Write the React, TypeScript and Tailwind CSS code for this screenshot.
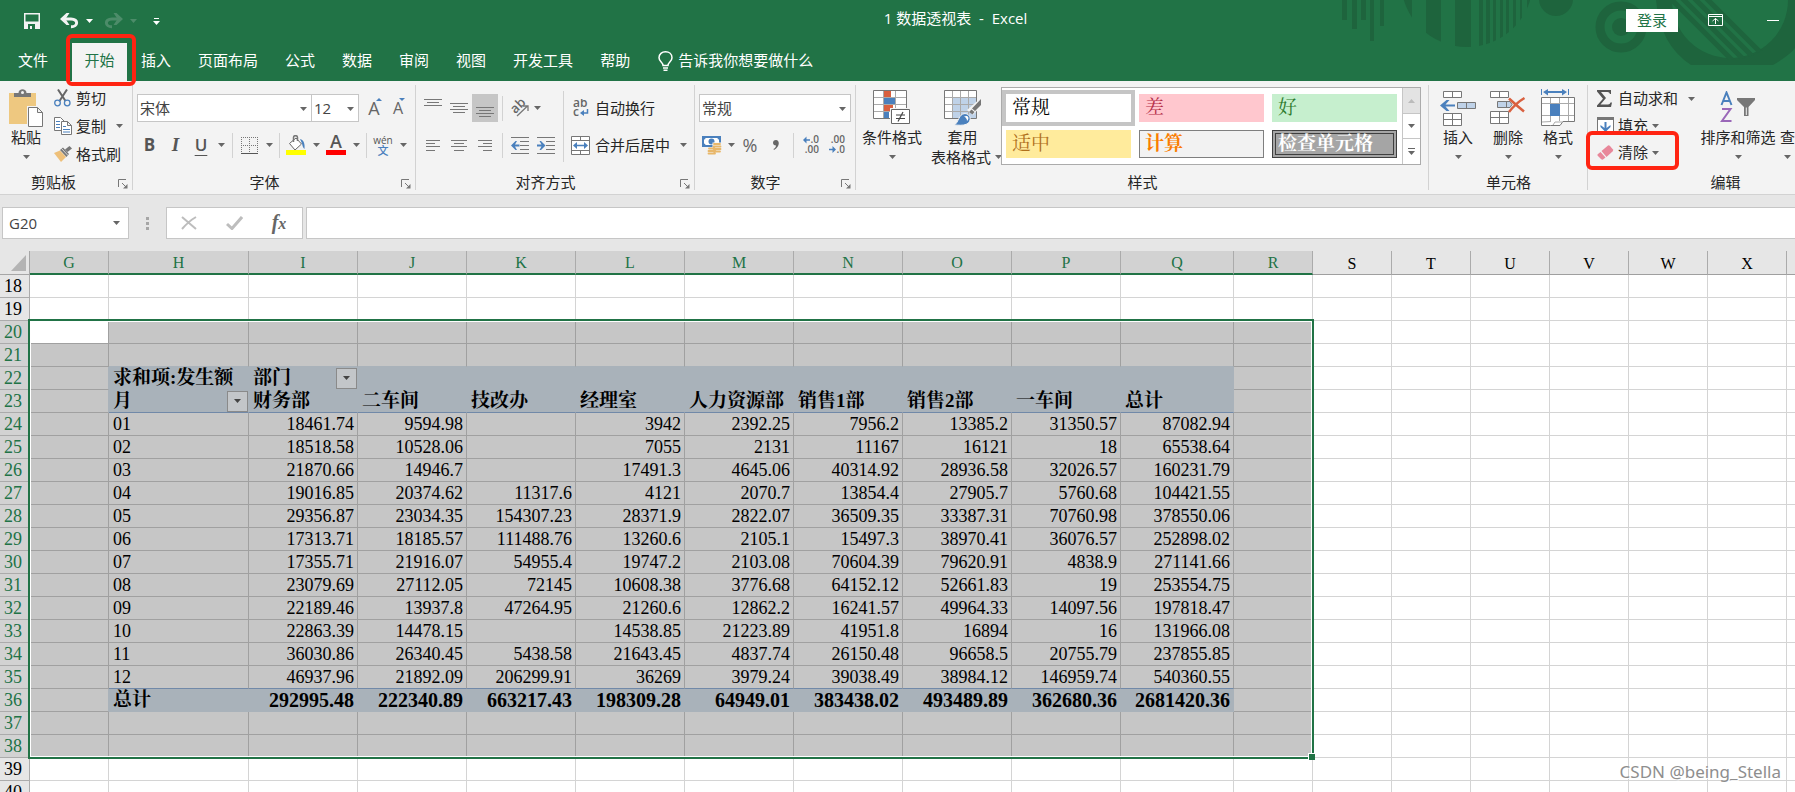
import type { ReactNode } from "react";

const UI = "font-['Open_Sans','Noto_Sans_CJK_SC',sans-serif]";
const SONG = "font-['Liberation_Serif','Noto_Serif_CJK_SC','Noto_Sans_CJK_SC',serif]";

function Caret({ className = "text-[#666]" }: { className?: string }) {
  return (
    <svg width="7" height="4" viewBox="0 0 7 4" className={`shrink-0 ${className}`} aria-hidden="true">
      <path d="M0 0H7L3.5 4Z" fill="currentColor" />
    </svg>
  );
}

function Launcher({ label }: { label: string }) {
  return (
    <button aria-label={label} className="absolute right-1 bottom-1 p-px">
      <svg width="10" height="10" viewBox="0 0 10 10" fill="none" stroke="#777" aria-hidden="true">
        <path d="M.5 8V.5H8M4 4L8 8" />
        <path d="M9.5 5V9.5H5Z" fill="#777" stroke="none" />
      </svg>
    </button>
  );
}

function Group({ label, launcher, className, labelClass = "", children }: { label: string; launcher?: boolean; className: string; labelClass?: string; children: ReactNode }) {
  return (
    <section aria-label={label} className={`relative flex shrink-0 flex-col ${className}`}>
      <div className="flex h-[90px] shrink-0 items-start">{children}</div>
      <div className={`h-[23px] shrink-0 text-center leading-[23px] ${labelClass}`}>{label}</div>
      {launcher && <Launcher label={`${label}设置`} />}
      <span className="absolute top-1 right-0 bottom-1 w-px bg-[#d2d2d2]" />
    </section>
  );
}

function Divider({ className = "mx-1 h-[25px]" }: { className?: string }) {
  return <span className={`w-px shrink-0 bg-[#d2d2d2] ${className}`} />;
}

function Tool({ label, className = "w-[26px]", children }: { label: string; className?: string; children: ReactNode }) {
  return (
    <button aria-label={label} className={`flex h-7 shrink-0 items-center justify-center ${className}`}>
      {children}
    </button>
  );
}

function Drop({ label, className = "w-3.5" }: { label: string; className?: string }) {
  return (
    <Tool label={label} className={className}>
      <Caret />
    </Tool>
  );
}

function Combo({ label, value, className }: { label: string; value: string; className: string }) {
  return (
    <div className={`relative h-7 border border-[#c6c6c6] bg-white ${className}`}>
      <select aria-label={label} className="h-full w-full appearance-none pl-0.5 text-[15px] text-[#444] outline-none">
        <option>{value}</option>
      </select>
      <span className="pointer-events-none absolute top-3 right-1">
        <Caret />
      </span>
    </div>
  );
}

function BigButton({ icon, label, className = "w-[50px]" }: { icon: ReactNode; label: string; className?: string }) {
  return (
    <button className={`flex shrink-0 flex-col items-center pt-2 ${className}`}>
      <span className="flex h-[38px] items-center">{icon}</span>
      <span className="h-5 leading-5 whitespace-nowrap">{label}</span>
      <span className="flex h-5 items-center">
        <Caret />
      </span>
    </button>
  );
}

/* ---------- icons ---------- */

const SaveIcon = () => (
  <svg width="16" height="16" viewBox="0 0 16 16" aria-hidden="true">
    <path fillRule="evenodd" fill="#f3f3f3" d="M0 0H16V16H0ZM1.500 1.500V8.500H14.500V1.500ZM4 11V16H6V13H8V16H11V11Z" />
  </svg>
);
const UndoIcon = ({ className }: { className: string }) => (
  <svg width="19" height="16" viewBox="0 0 19 16" fill="none" className={className} aria-hidden="true">
    <path d="M3 6H11C19 6 18 14 11 13.8" stroke="currentColor" strokeWidth="3" />
    <path d="M0 6L6.500 0H9.500L5.500 6L9.500 12H6.500Z" fill="currentColor" />
  </svg>
);
const PasteIcon = () => (
  <svg width="35" height="38" viewBox="0 0 35 38" aria-hidden="true">
    <rect y="4" width="27" height="31" fill="#eec880" />
    <path d="M5 4H9.500C9.500 -1 17.500 -1 17.500 4H22V8H5Z" fill="#777" />
    <circle cx="13.500" cy="3.500" r="1.500" fill="#f3f3f3" />
    <path d="M18 17H29.500L35 22.500V38H18Z" fill="#f3f3f3" />
    <path d="M19.500 18.500H28.500L33.500 23.500V37.500H19.500ZM28.500 18.500V23.500H33.500" fill="#fff" stroke="#777" />
  </svg>
);
const CutIcon = () => (
  <svg width="17" height="18" viewBox="0 0 17 18" fill="none" aria-hidden="true">
    <path d="M4 .5L11.500 12M13 .5L5.500 12" stroke="#666" strokeWidth="2" />
    <circle cx="3.500" cy="14" r="2.800" stroke="#4a80bd" strokeWidth="1.300" />
    <circle cx="13.200" cy="14" r="2.800" stroke="#4a80bd" strokeWidth="1.300" />
  </svg>
);
const CopyIcon = () => (
  <svg width="18" height="18" viewBox="0 0 18 18" fill="#fff" stroke="#777" aria-hidden="true">
    <path d="M.5 .5H6.500L10.500 4.500V13.500H.5Z" />
    <path d="M2 4.500H6M2 7.500H6M2 10.500H6" stroke="#4a80bd" />
    <path d="M7.500 4.500H13.500L17.500 8.500V17.500H7.500ZM13.500 4.500V8.500H17.500" />
    <path d="M9 9.500H12M9 12.500H16M9 15H16" stroke="#4a80bd" />
  </svg>
);
const PainterIcon = () => (
  <svg width="18" height="16" viewBox="0 0 18 16" aria-hidden="true">
    <path d="M0 7L6 4.500L12 11L7 16Z" fill="#eec07a" />
    <path d="M6 4L9 1.500L15 8L12.500 11Z" fill="#777" />
    <path d="M11 3.500L15.500 0L18 2.500L13.500 6Z" fill="#777" />
    <path d="M7.500 2.500L14 9.500" stroke="#f3f3f3" strokeWidth=".8" />
  </svg>
);
const FontSizeIcon = ({ up }: { up?: boolean }) => (
  <span className="flex items-start">
    <span className={`leading-6 text-[#666] ${up ? "text-[18px]" : "text-[16px]"}`}>A</span>
    <svg width="6" height="3" viewBox="0 0 6 3" className="-ml-1 mt-0.5" aria-hidden="true">
      <path d={up ? "M0 3L3 0L6 3Z" : "M0 0H6L3 3Z"} fill="#4a80bd" />
    </svg>
  </span>
);
const BordersIcon = () => (
  <svg width="17" height="17" viewBox="0 0 17 17" stroke="#777" fill="none" aria-hidden="true">
    <path d="M0 .5H17M.5 0V16M16.500 0V16M8.500 0V16M0 8.500H17" strokeDasharray="1 1" />
    <path d="M0 16.500H17" stroke="#555" />
  </svg>
);
const BucketIcon = () => (
  <svg width="20" height="20" viewBox="0 0 20 20" fill="none" aria-hidden="true">
    <path d="M3.500 8.500L10 3L15.500 9L9 15Z" fill="#fff" stroke="#666" />
    <path d="M7.500 7V2.500C7.500 0 11.500 0 11.500 2.500V6" stroke="#777" strokeWidth="1.500" />
    <path d="M14 4C18 5 19 9 18.500 14C17 13 16.500 11 16 8.500Z" fill="#4a80bd" />
    <rect y="15" width="20" height="5" fill="#ff0" />
  </svg>
);
const Lines = ({ rows, h = 18 }: { rows: [number, number, number][]; h?: number }) => (
  <svg width="18" height={h} viewBox={`0 0 18 ${h}`} stroke="#777" aria-hidden="true">
    {rows.map(([x1, x2, y]) => (
      <path key={y} d={`M${x1} ${y + 0.5}H${x2}`} />
    ))}
  </svg>
);
const OrientationIcon = () => (
  <svg width="20" height="18" viewBox="0 0 20 18" aria-hidden="true">
    <text x="3" y="14.500" transform="rotate(-45 5 12)" fontSize="13" fontWeight="600" fill="#666">ab</text>
    <path d="M7 17L17.500 7M12.500 7H18V12" stroke="#777" strokeWidth="1.300" fill="none" />
  </svg>
);
const IndentIcon = ({ more }: { more?: boolean }) => (
  <svg width="18" height="17" viewBox="0 0 18 17" aria-hidden="true">
    <path d="M0 .5H18M9 4.500H18M9 8.500H18M9 12.500H18M0 16.500H18" stroke="#777" />
    <path d={more ? "M8.500 8.500L4 4H2.500L4.500 7.500H0V9.500H4.500L2.500 13H4Z" : "M0 8.500L4.500 4H6L4 7.500H8.500V9.500H4L6 13H4.500Z"} fill="#4a80bd" />
  </svg>
);
const WrapIcon = () => (
  <svg width="16" height="18" viewBox="0 0 16 18" aria-hidden="true">
    <text x="0" y="8" fontSize="12" fontWeight="600" fill="#666">ab</text>
    <text x="0" y="17" fontSize="12" fontWeight="600" fill="#666">c</text>
    <path d="M14.500 10V14H9" stroke="#4a80bd" strokeWidth="1.500" fill="none" />
    <path d="M7 14L11 11V17Z" fill="#4a80bd" />
  </svg>
);
const MergeIcon = () => (
  <svg width="19" height="19" viewBox="0 0 19 19" aria-hidden="true">
    <path d="M.5 .5H18.500V18.500H.5ZM.5 4.500H18.500M.5 14.500H18.500M9.500 0V4.500M9.500 14.500V19" stroke="#777" fill="#fff" />
    <path d="M2 9.500L6 6V8.700H13V6L17 9.500L13 13V10.300H6V13Z" fill="#4a80bd" />
  </svg>
);
const CurrencyIcon = () => (
  <svg width="20" height="19" viewBox="0 0 20 19" aria-hidden="true">
    <path d="M0 0H19V11H0Z" fill="#4a80bd" />
    <path d="M2 3.500Q3.500 3.500 3.500 2H15.500Q15.500 3.500 17 3.500V7.500Q15.500 7.500 15.500 9H3.500Q3.500 7.500 2 7.500Z" fill="#fff" />
    <circle cx="9.500" cy="5.500" r="3" fill="#4a80bd" />
    <path d="M10.500 6.500H20V18H16V19H5V11H10.500Z" fill="#f3f3f3" />
    <path d="M12 8H18M11.500 10.500H18.500M11.500 13H18.500M12 15.500H18M7 12.500H12.500M6.500 15H13.500M6.500 17.500H13" stroke="#e8b76a" strokeWidth="1.800" strokeLinecap="round" />
  </svg>
);
const DecimalIcon = ({ more }: { more?: boolean }) => (
  <svg width="18" height="20" viewBox="0 0 18 20" fontSize="10" fontWeight="600" fill="#666" aria-hidden="true">
    <text x="17" y="8" textAnchor="end">{more ? ".0" : ".00"}</text>
    <text x="17" y="18" textAnchor="end">{more ? ".00" : ".0"}</text>
    <path d={more ? "M1 5L4.500 1.500V4.200H8V5.800H4.500V8.500Z" : "M8 14.500L4.500 11V13.700H1V15.300H4.500V18Z"} fill="#4a80bd" />
  </svg>
);
const ConditionalIcon = () => (
  <svg width="38" height="36" viewBox="0 0 38 36" aria-hidden="true">
    <path d="M.5 .5H33.500V28.500H.5Z" fill="#fff" stroke="#777" />
    <path d="M1 7.500H33M1 14.500H33M1 21.500H33M10.500 1V28M22.500 1V28" stroke="#aaa" />
    <path d="M11 1H18V7H11ZM11 15H20V21H11Z" fill="#d9603f" />
    <path d="M11 8H22V14H11ZM11 22H16V28H11Z" fill="#4a80bd" />
    <path d="M17 18H38V36H17Z" fill="#f3f3f3" />
    <path d="M18.500 19.500H36.500V33.500H18.500Z" fill="#fff" stroke="#666" />
    <path d="M23 25H32M23 28.500H32M30 22L25 31.500" stroke="#444" strokeWidth="1.200" />
  </svg>
);
const TableFormatIcon = () => (
  <svg width="38" height="36" viewBox="0 0 38 36" aria-hidden="true">
    <path d="M.5 .5H32.500V28.500H.5Z" fill="#fff" stroke="#777" />
    <path d="M9 8H32V28H9Z" fill="#bfd2e8" />
    <path d="M1 7.500H32M1 14.500H32M1 21.500H32M8.500 1V28M16.500 1V28M24.500 1V28" stroke="#aaa" />
    <path d="M38 7V15L29 25L23 20Z" fill="#f3f3f3" />
    <path d="M37 9V15L31 21L28 18.500ZM27.500 19.500L30.500 22L28.500 24.500L25 22Z" fill="#777" />
    <path d="M10 35C15 33 14 24 21 23.500C27 24 28 31 23 34C19 36 14 35 10 35Z" fill="#4a80bd" stroke="#f3f3f3" />
    <path d="M20 26.500C24 24.500 26 28 23 31Q23 28 20 26.500Z" fill="#fff" />
  </svg>
);
const InsertIcon = () => (
  <svg width="36" height="36" viewBox="0 0 36 36" fill="#fff" stroke="#777" aria-hidden="true">
    <path d="M3.500 1.500H21.500V7.500H3.500ZM12.500 1.500V7.500M3.500 23.500H21.500V35.500H3.500ZM12.500 23.500V35.500M3.500 29.500H21.500" />
    <path d="M17.500 12.500H35.500V18.500H17.500ZM26.500 12.500V18.500" fill="#bfd2e8" />
    <path d="M0 15.500L6.500 10H9.500L5.500 14.500H15V16.500H5.500L9.500 21H6.500Z" fill="#4a80bd" stroke="none" />
  </svg>
);
const DeleteIcon = () => (
  <svg width="36" height="36" viewBox="0 0 36 36" fill="#fff" stroke="#777" aria-hidden="true">
    <path d="M.5 1.500H18.500V7.500H.5ZM9.500 1.500V7.500M.5 21.500H18.500V33.500H.5ZM9.500 21.500V33.500M.5 27.500H18.500" />
    <path d="M7.500 11.500H20L22 14.500L20 17.500H7.500ZM16.500 11.500V17.500" fill="#bfd2e8" />
    <path d="M19 8.500Q26 15 34 21.500M34.500 8Q26 13 19 22" stroke="#d9603f" strokeWidth="2.500" fill="none" />
  </svg>
);
const FormatIcon = () => (
  <svg width="34" height="38" viewBox="0 0 34 38" fill="none" aria-hidden="true">
    <path d="M.5 0V6M27.500 0V6" stroke="#4a80bd" />
    <path d="M2 3L7 0V2H21V0L26 3L21 6.500V4H7V6.500Z" fill="#4a80bd" />
    <path d="M.5 8.500H33.500V32.500H22L19 36.500H12L9.500 36.500H.5Z" fill="#fff" stroke="#777" />
    <path d="M1 14.500H33M1 26.500H33M9.500 9V32M18.500 9V32M27.500 9V32M1 33L10 32.500M12 36L14 33H22" stroke="#aaa" />
    <rect x="9" y="15" width="10" height="12" fill="#4a80bd" />
  </svg>
);
const SumIcon = () => (
  <svg width="15" height="17" viewBox="0 0 15 17" aria-hidden="true">
    <path d="M0 0H14V4H13Q12.500 2 10.500 2H4L9 8L3.500 14.500H11Q13 14.500 13.500 12.500H15L14 17H0V15.500L6 8.700L0 1.500Z" fill="#555" />
  </svg>
);
const FillIcon = () => (
  <svg width="17" height="17" viewBox="0 0 17 17" aria-hidden="true">
    <path d="M.5 .5H16.500V16.500H.5Z" fill="#fff" stroke="#777" />
    <path d="M0 0H17V3H0Z" fill="#777" />
    <path d="M8.500 15L3.500 10V8L7.500 11V5H9.500V11L13.500 8V10Z" fill="#4a80bd" />
  </svg>
);
const EraserIcon = () => (
  <svg width="17" height="15" viewBox="0 0 17 15" aria-hidden="true">
    <path d="M4.500 6L11 .5Q12 0 13 1L16 4.500Q16.500 5.500 15.500 6.500L9.500 12Z" fill="#e8879a" />
    <path d="M3.500 7L8.500 12.500L6 14.500Q5 15 4 14L.5 10.500Q0 9.500 1 9Z" fill="#e8879a" />
  </svg>
);
const SortIcon = () => (
  <svg width="36" height="34" viewBox="0 0 36 34" aria-hidden="true">
    <g fill="none" strokeWidth="2">
      <path d="M1.500 14L6.500 1.500L11.500 14M3 10H10" stroke="#4a80bd" />
      <path d="M2 18H10.500L2 30H11.500" stroke="#9a67b8" />
    </g>
    <path d="M17 7H35V9L28.500 16V25H24V16L17 9Z" fill="#777" />
    <path d="M26.300 16.500V24" stroke="#f3f3f3" />
  </svg>
);
const BulbIcon = () => (
  <svg width="15" height="20" viewBox="0 0 15 20" fill="none" stroke="#fff" strokeWidth="1.500" aria-hidden="true">
    <path d="M5 14.500C5 11.500 1 10.500 1 6.800C1 3 4 .8 7.500 .8S14 3 14 6.800C14 10.500 10 11.500 10 14.500ZM5 17H10M5.500 19.200H9.500" />
  </svg>
);

function HeaderArt() {
  return (
    <svg width="460" height="66" viewBox="0 0 460 66" className="pointer-events-none absolute top-0 right-0 text-[#1e643d]" fill="currentColor" aria-hidden="true">
      <defs>
        <clipPath id="disc"><circle cx="132" cy="-19" r="66" /></clipPath>
        <clipPath id="bowl"><circle cx="395" cy="2" r="58" /></clipPath>
      </defs>
      <path d="M7 0H12V20H7ZM17 0H22V29H17ZM26 0H31V20H26ZM35 0H39V41H35ZM45 0H49V26H45Z" />
      <path clipPath="url(#disc)" d="M60 0H77V60H60ZM91 0H106V60H91ZM120 0H136V60H120ZM144 0H148V60H144ZM151 0H155V60H151ZM158 0H161V60H158ZM165 0H168V60H165ZM171 0H174V60H171ZM178 0H181V60H178ZM185 0H187V60H185ZM192 0H195V60H192Z" />
      <circle cx="221" cy="-1" r="17" />
      <circle cx="286" cy="27" r="21" fill="none" stroke="currentColor" strokeWidth="9" />
      <circle cx="286" cy="27" r="9" />
      <path fillRule="evenodd" d="M321 0Q325 45 356 65H438Q455 55 460 48V0H453A58 58 0 0 1 337 0Z" />
      <g clipPath="url(#bowl)" stroke="currentColor" strokeWidth="5">
        <path d="M325 -12L410 73M337 -12L422 73M349 -12L434 73M361 -12L446 73" />
      </g>
    </svg>
  );
}

/* ---------- header ---------- */

function TitleBar() {
  return (
    <div className="relative grid h-10 grid-cols-[883fr_auto_767fr] items-center text-[15px] text-white">
      <div className="flex items-center pt-0.5 pl-6">
        <button aria-label="保存"><SaveIcon /></button>
        <button aria-label="撤消" className="ml-5"><UndoIcon className="text-[#f3f3f3]" /></button>
        <button aria-label="撤消选项" className="ml-[7px]"><Caret className="text-white" /></button>
        <button aria-label="恢复" className="ml-[11px]"><UndoIcon className="-scale-x-100 text-[#4c8c69]" /></button>
        <button aria-label="恢复选项" className="ml-[7px]"><Caret className="text-[#4c8c69]" /></button>
        <button aria-label="自定义快速访问工具栏" className="ml-4 flex flex-col items-center gap-0.5">
          <span className="h-px w-[5px] bg-white" />
          <Caret className="text-white" />
        </button>
      </div>
      <h1 className="pb-[3px] whitespace-pre">1 数据透视表  -  Excel</h1>
      <div className="flex items-center justify-end pr-4">
        <button className="h-[23px] w-[52px] bg-white leading-[22px] text-[#217346]">登录</button>
        <button aria-label="功能区显示选项" className="ml-[30px]">
          <svg width="15" height="12" viewBox="0 0 15 12" fill="none" stroke="#fff" aria-hidden="true">
            <path d="M.5 .5H14.500V11.500H.5ZM.5 2.500H14.500M7.500 10V4.500M4.500 7L7.500 4.500L10.500 7" />
          </svg>
        </button>
        <button aria-label="最小化" className="ml-11 flex h-3 w-3 items-center"><span className="h-px w-3 bg-white" /></button>
      </div>
    </div>
  );
}

const TABS = ["插入", "页面布局", "公式", "数据", "审阅", "视图", "开发工具", "帮助"];

function Tabs() {
  return (
    <nav className="relative flex h-[41px] items-end text-[15px] text-white">
      <button className="ml-[18px] h-[41px]">文件</button>
      <button className="relative ml-6 h-[38px] w-[55px] bg-[#f3f3f3] pb-1 text-[#217346]">
        开始
        <span className="pointer-events-none absolute -top-[9px] -right-[9px] -bottom-[5px] -left-1.5 z-10 rounded-md border-4 border-[#ff2412]" />
      </button>
      <div className="ml-3.5 flex gap-[27px]">
        {TABS.map((t) => (
          <button key={t} className="h-[41px]">{t}</button>
        ))}
      </div>
      <button className="ml-7 flex h-[41px] items-center gap-[5px]">
        <BulbIcon />
        告诉我你想要做什么
      </button>
    </nav>
  );
}

/* ---------- ribbon ---------- */

const alignRow = "flex h-7 items-center";
const fontDivider = "mx-[3px] h-[25px]";

function Ribbon() {
  return (
    <div className="flex h-[114px] shrink-0 overflow-hidden border-b border-[#d2d2d2] bg-[#f3f3f3] text-[15px] text-[#262626]">
      <Group label="剪贴板" launcher className="w-[133px]" labelClass="pr-[26px]">
        <BigButton icon={<PasteIcon />} label="粘贴" className="ml-0.5 w-12" />
        <div className="ml-1 flex flex-col pt-[3px]">
          <button className="flex h-7 items-center gap-[5px]"><CutIcon />剪切</button>
          <div className="flex h-7 items-center">
            <button className="flex items-center gap-1"><CopyIcon />复制</button>
            <button aria-label="复制选项" className="ml-2.5"><Caret /></button>
          </div>
          <button className="flex h-7 items-center gap-1"><PainterIcon />格式刷</button>
        </div>
      </Group>

      <Group label="字体" launcher className="w-[283px]" labelClass="pr-5">
        <div className="flex flex-col gap-[9px] pt-[13px] pl-1">
          <div className="flex items-center">
            <Combo label="字体" value="宋体" className="w-[175px]" />
            <Combo label="字号" value="12" className="-ml-px w-12" />
            <Tool label="增大字号" className="ml-1 w-6"><FontSizeIcon up /></Tool>
            <Tool label="减小字号" className="w-6"><FontSizeIcon /></Tool>
          </div>
          <div className="flex items-center text-[17px] text-[#555]">
            <Tool label="加粗" className="w-[25px] font-bold">B</Tool>
            <Tool label="倾斜" className="w-[27px] font-['Liberation_Serif',serif] text-[19px] font-bold italic">I</Tool>
            <Tool label="下划线" className="w-6 font-semibold underline underline-offset-4">U</Tool>
            <Drop label="下划线选项" className="w-4" />
            <Divider className={fontDivider} />
            <Tool label="边框"><BordersIcon /></Tool>
            <Drop label="边框选项" />
            <Divider className={fontDivider} />
            <Tool label="填充颜色"><BucketIcon /></Tool>
            <Drop label="填充颜色选项" />
            <Tool label="字体颜色" className="w-[26px] flex-col">
              <span className="h-[15px] text-[18px] leading-[13px] font-semibold">A</span>
              <span className="h-[5px] w-5 bg-[#f00]" />
            </Tool>
            <Drop label="字体颜色选项" />
            <Divider className={fontDivider} />
            <Tool label="拼音指南" className="w-[26px] flex-col">
              <span className="text-[10px] leading-[10px]">wén</span>
              <span className="text-[11px] leading-[11px] font-medium text-[#4a80bd]">文</span>
            </Tool>
            <Drop label="拼音选项" />
          </div>
        </div>
      </Group>

      <Group label="对齐方式" launcher className="w-[279px]" labelClass="pr-5">
        <div className="flex flex-col gap-[9px] pt-[13px] pl-1">
          <div className={alignRow}>
            <Tool label="顶端对齐"><Lines rows={[[0, 18, 0], [3, 15, 3], [0, 18, 6]]} /></Tool>
            <Tool label="垂直居中"><Lines rows={[[0, 18, 4], [3, 15, 7], [0, 18, 10], [3, 15, 13]]} /></Tool>
            <Tool label="底端对齐" className="w-[26px] bg-[#c6c6c6]"><Lines rows={[[0, 18, 8], [3, 15, 11], [0, 18, 14], [3, 15, 17]]} /></Tool>
            <Divider />
            <Tool label="方向"><OrientationIcon /></Tool>
            <Drop label="方向选项" className="w-2" />
          </div>
          <div className={alignRow}>
            <Tool label="左对齐"><Lines h={11} rows={[[2, 16, 0], [2, 11, 3], [2, 16, 6], [2, 11, 10]]} /></Tool>
            <Tool label="居中"><Lines h={11} rows={[[1, 17, 0], [4, 14, 3], [1, 17, 6], [4, 14, 10]]} /></Tool>
            <Tool label="右对齐"><Lines h={11} rows={[[2, 16, 0], [7, 16, 3], [2, 16, 6], [7, 16, 10]]} /></Tool>
            <Divider />
            <Tool label="减少缩进量"><IndentIcon /></Tool>
            <Tool label="增加缩进量"><IndentIcon more /></Tool>
          </div>
        </div>
        <Divider className="mx-1 mt-2.5 h-[71px]" />
        <div className="flex flex-col gap-[9px] pt-[13px] pl-[3px]">
          <button className="flex h-7 items-center"><span className="flex w-6 pl-0.5"><WrapIcon /></span>自动换行</button>
          <div className="flex h-7 items-center">
            <button className="flex items-center"><span className="w-6"><MergeIcon /></span>合并后居中</button>
            <button aria-label="合并选项" className="ml-2.5"><Caret /></button>
          </div>
        </div>
      </Group>

      <Group label="数字" launcher className="w-[161px]" labelClass="pr-5">
        <div className="flex flex-col gap-[9px] pt-[13px] pl-1">
          <Combo label="数字格式" value="常规" className="w-[152px]" />
          <div className="flex h-7 items-center text-[#666]">
            <Tool label="会计数字格式"><CurrencyIcon /></Tool>
            <Drop label="会计选项" className="w-3" />
            <Tool label="百分比样式" className="w-[26px] text-[18px]">%</Tool>
            <Tool label="千位分隔样式" className="w-[26px]">
              <svg width="6" height="10" viewBox="0 0 6 10" aria-hidden="true"><path d="M3 0C7 0 7 7 1 10L.5 9C2.500 8 3 6.500 3 5.500C-1 5.500 -1 0 3 0Z" fill="#666" /></svg>
            </Tool>
            <Divider />
            <Tool label="增加小数位数"><DecimalIcon more /></Tool>
            <Tool label="减少小数位数"><DecimalIcon /></Tool>
          </div>
        </div>
      </Group>

      <Group label="样式" className="w-[573px]">
        <BigButton icon={<ConditionalIcon />} label="条件格式" className="ml-1 w-16" />
        <button className="flex w-[77px] shrink-0 flex-col items-center pt-2">
          <span className="flex h-[38px] items-center"><TableFormatIcon /></span>
          <span className="leading-5">套用</span>
          <span className="ml-2 flex items-center gap-1 leading-5 whitespace-nowrap">表格格式<Caret /></span>
        </button>
        <div className={`mt-1.5 flex h-[78px] border border-[#ababab] bg-white text-left text-[19px] leading-[26px] ${SONG}`}>
          <div className="grid grid-cols-[125px_125px_125px] grid-rows-[28px_28px] gap-2 px-1 pt-1.5 pr-[5px]">
            <button className="bg-white pl-1.5 text-left text-black ring-4 ring-[#c5c5c5]">常规</button>
            <button className="bg-[#ffc7ce] pl-1.5 text-left text-[#b5304a]">差</button>
            <button className="bg-[#c6efce] pl-1.5 text-left text-[#2c7a2c]">好</button>
            <button className="bg-[#ffeb9c] pl-1.5 text-left text-[#b0701c]">适中</button>
            <button className="border border-[#7f7f7f] bg-[#f2f2f2] pl-[5px] text-left font-bold text-[#fa7d00]">计算</button>
            <button className="border-4 border-double border-[#3f3f3f] bg-[#a5a5a5] pl-0.5 text-left leading-5 font-bold text-white">检查单元格</button>
          </div>
          <div className="flex w-[18px] flex-col border-l border-[#c6c6c6]">
            <button aria-label="上一行" className="flex h-[25px] items-center justify-center bg-[#e3e3e3]"><Caret className="rotate-180 text-[#bbb]" /></button>
            <button aria-label="下一行" className="flex h-[25px] items-center justify-center border-t border-[#c6c6c6]"><Caret /></button>
            <button aria-label="其他样式" className="flex h-[26px] flex-col items-center justify-center gap-0.5 border-t border-[#c6c6c6]">
              <span className="h-px w-[7px] bg-[#666]" />
              <Caret />
            </button>
          </div>
        </div>
      </Group>

      <Group label="单元格" className="w-[159px]">
        <div className="flex pl-1">
          <BigButton icon={<InsertIcon />} label="插入" />
          <BigButton icon={<DeleteIcon />} label="删除" />
          <BigButton icon={<FormatIcon />} label="格式" />
        </div>
      </Group>

      <Group label="编辑" className="w-[275px]">
        <div className="flex w-[110px] shrink-0 flex-col items-start pt-1 pl-[9px] whitespace-nowrap">
          <div className="flex h-[27px] items-center">
            <button className="flex items-center"><span className="w-[21px]"><SumIcon /></span>自动求和</button>
            <button aria-label="求和选项" className="ml-2.5"><Caret /></button>
          </div>
          <button className="flex h-[27px] items-center"><span className="w-[21px]"><FillIcon /></span>填充<Caret className="ml-1 text-[#666]" /></button>
          <button className="relative flex h-[27px] items-center">
            <span className="w-[21px]"><EraserIcon /></span>清除<Caret className="ml-1 text-[#666]" />
            <span className="pointer-events-none absolute -top-2 -right-5 -bottom-1 -left-[11px] rounded-md border-4 border-[#ff2412]" />
          </button>
        </div>
        <BigButton icon={<SortIcon />} label="排序和筛选" className="w-20" />
        <BigButton icon={null} label="查" className="ml-0.5 w-[15px]" />
      </Group>
    </div>
  );
}

/* ---------- formula bar ---------- */

function FormulaBar() {
  return (
    <div className="flex h-14 shrink-0 items-center pl-0.5">
      <div className="flex h-8 w-[127px] items-center border border-[#c6c6c6] bg-white pr-2">
        <input aria-label="名称框" defaultValue="G20" className="w-0 grow pl-1.5 text-[15px] text-[#444] outline-none" />
        <button aria-label="名称列表"><Caret /></button>
      </div>
      <div className="mx-4 flex w-[5px] flex-col items-center gap-0.5">
        <span className="size-[3px] bg-[#a6a6a6]" />
        <span className="size-[3px] bg-[#a6a6a6]" />
        <span className="size-[3px] bg-[#a6a6a6]" />
      </div>
      <div className="flex h-8 w-[137px] items-center border border-[#c6c6c6] bg-white">
        <button aria-label="取消" className="flex w-11 justify-center">
          <svg width="16" height="14" viewBox="0 0 16 14" stroke="#bdbdbd" strokeWidth="2" aria-hidden="true"><path d="M1 1Q8 7 15 13M15 1Q8 5 1 13" fill="none" /></svg>
        </button>
        <button aria-label="输入" className="flex w-[46px] justify-center">
          <svg width="17" height="14" viewBox="0 0 17 14" aria-hidden="true"><path d="M1 8L6 12.500L16 1" fill="none" stroke="#bdbdbd" strokeWidth="3" /></svg>
        </button>
        <button aria-label="插入函数" className="flex w-11 items-baseline justify-center font-['Liberation_Serif',serif] text-[20px] leading-6 font-bold text-[#666] italic">
          f<span className="text-[16px]">x</span>
        </button>
      </div>
      <input aria-label="编辑栏" className="ml-[3px] h-8 grow border border-r-0 border-[#c6c6c6] bg-white px-2 outline-none" />
    </div>
  );
}

/* ---------- sheet ---------- */

const COLS: [string, string][] = [
  ["G", "w-[79px]"], ["H", "w-[140px]"], ["I", "w-[109px]"], ["J", "w-[109px]"], ["K", "w-[109px]"], ["L", "w-[109px]"],
  ["M", "w-[109px]"], ["N", "w-[109px]"], ["O", "w-[109px]"], ["P", "w-[109px]"], ["Q", "w-[113px]"], ["R", "w-[79px]"],
  ["S", "w-[79px]"], ["T", "w-[79px]"], ["U", "w-[79px]"], ["V", "w-[79px]"], ["W", "w-[79px]"], ["X", "w-[79px]"], ["", "w-[79px]"],
];

const DATA: Record<number, string[]> = {
  22: ["求和项:发生额", "部门"],
  23: ["月", "财务部", "二车间", "技改办", "经理室", "人力资源部", "销售1部", "销售2部", "一车间", "总计"],
  24: ["01", "18461.74", "9594.98", "", "3942", "2392.25", "7956.2", "13385.2", "31350.57", "87082.94"],
  25: ["02", "18518.58", "10528.06", "", "7055", "2131", "11167", "16121", "18", "65538.64"],
  26: ["03", "21870.66", "14946.7", "", "17491.3", "4645.06", "40314.92", "28936.58", "32026.57", "160231.79"],
  27: ["04", "19016.85", "20374.62", "11317.6", "4121", "2070.7", "13854.4", "27905.7", "5760.68", "104421.55"],
  28: ["05", "29356.87", "23034.35", "154307.23", "28371.9", "2822.07", "36509.35", "33387.31", "70760.98", "378550.06"],
  29: ["06", "17313.71", "18185.57", "111488.76", "13260.6", "2105.1", "15497.3", "38970.41", "36076.57", "252898.02"],
  30: ["07", "17355.71", "21916.07", "54955.4", "19747.2", "2103.08", "70604.39", "79620.91", "4838.9", "271141.66"],
  31: ["08", "23079.69", "27112.05", "72145", "10608.38", "3776.68", "64152.12", "52661.83", "19", "253554.75"],
  32: ["09", "22189.46", "13937.8", "47264.95", "21260.6", "12862.2", "16241.57", "49964.33", "14097.56", "197818.47"],
  33: ["10", "22863.39", "14478.15", "", "14538.85", "21223.89", "41951.8", "16894", "16", "131966.08"],
  34: ["11", "36030.86", "26340.45", "5438.58", "21643.45", "4837.74", "26150.48", "96658.5", "20755.79", "237855.85"],
  35: ["12", "46937.96", "21892.09", "206299.91", "36269", "3979.24", "39038.49", "38984.12", "146959.74", "540360.55"],
  36: ["总计", "292995.48", "222340.89", "663217.43", "198309.28", "64949.01", "383438.02", "493489.89", "362680.36", "2681420.36"],
};

const ROWS = Array.from({ length: 23 }, (_, i) => i + 18);

function cellClass(row: number, col: number) {
  const selected = row >= 20 && row <= 38 && col <= 11;
  const pivotCol = col >= 1 && col <= 10;
  const banded = pivotCol && (row === 22 || row === 23 || row === 36);
  const bg = row === 20 && col === 0 ? "bg-white" : banded ? "bg-[#a9b2ba]" : selected ? "bg-[#c6c6c6]" : "bg-white";
  const line = selected ? "border-[#a0a0a0]" : "border-[#d4d4d4]";
  const right = banded || (col === 0 && (row === 22 || row === 23 || row === 36)) ? "border-r-[#a9b2ba]" : "";
  const bottom = pivotCol
    ? row === 23 || row === 35
      ? "border-b-[#7189a8]"
      : row === 21 || row === 22 || row === 36
        ? "border-b-[#a9b2ba]"
        : ""
    : "";
  const align = col >= 2 && row >= 24 ? "pr-[3px] text-right" : "pl-1 text-left";
  const weight = banded ? (row === 36 && col > 1 ? "text-[20px] font-bold" : "text-[19px] font-bold") : "text-[18px]";
  return `h-[23px] overflow-hidden border-r border-b p-0 leading-[22px] whitespace-nowrap text-black ${bg} ${line} ${right} ${bottom} ${align} ${weight}`;
}

function Cell({ row, col }: { row: number; col: number }) {
  const text = DATA[row]?.[col - 1] ?? "";
  const hasFilter = (row === 22 && col === 2) || (row === 23 && col === 1);
  return (
    <td className={cellClass(row, col)}>
      {hasFilter ? (
        <div className="flex h-[22px] items-center justify-between">
          {text}
          <button aria-label={`筛选${text}`} className="flex size-[21px] items-center justify-center border border-[#8a8a8a] bg-[#c3c6c9]">
            <Caret className="text-[#444]" />
          </button>
        </div>
      ) : (
        text
      )}
    </td>
  );
}

function Sheet() {
  return (
    <div className={`relative shrink-0 ${SONG}`}>
      <table className="w-[1866px] table-fixed border-separate border-spacing-0">
        <colgroup>
          <col className="w-[30px]" />
          {COLS.map(([name, width]) => (
            <col key={name} className={width} />
          ))}
        </colgroup>
        <thead>
          <tr>
            <th className="h-6 border-r border-b border-[#a6a6a6] bg-[#e6e6e6] p-0">
              <svg width="15" height="16" viewBox="0 0 15 16" className="ml-[11px]" aria-label="全选"><path d="M15 0V16H0Z" fill="#b4b4b4" /></svg>
            </th>
            {COLS.map(([name], i) => (
              <th
                key={name}
                scope="col"
                className={`h-6 border-r border-r-[#ababab] p-0 pt-px text-[16px] leading-[21px] font-normal ${i <= 11 ? "border-b-2 border-b-[#217346] bg-[#d2d2d2] text-[#217346]" : "border-b border-b-[#9f9f9f] bg-[#e6e6e6] text-black"}`}
              >
                {name}
              </th>
            ))}
          </tr>
        </thead>
        <tbody>
          {ROWS.map((row) => (
            <tr key={row}>
              <th
                scope="row"
                className={`h-[23px] border-r border-b border-[#ababab] p-0 pl-1 text-left text-[18px] leading-[22px] font-normal ${row >= 20 && row <= 38 ? "bg-[#d2d2d2] text-[#217346]" : "bg-[#e6e6e6] text-black"}`}
              >
                {row}
              </th>
              {COLS.map(([name], col) => (
                <Cell key={name} row={row} col={col} />
              ))}
            </tr>
          ))}
        </tbody>
      </table>
      <div className="pointer-events-none absolute top-[68px] left-7 h-[440px] w-[1286px] border-2 border-[#217346]">
        <div className="h-full border border-white" />
        <span className="absolute -right-[3px] -bottom-[3px] size-[7px] border-t border-l border-white bg-[#217346]" />
      </div>
    </div>
  );
}

export default function App() {
  return (
    <main className={`relative flex h-screen flex-col overflow-hidden bg-[#e6e6e6] ${UI}`}>
      <header className="relative shrink-0 bg-[#217346]">
        <HeaderArt />
        <TitleBar />
        <Tabs />
      </header>
      <Ribbon />
      <FormulaBar />
      <Sheet />
      <p className="pointer-events-none absolute right-3.5 bottom-2 font-['Noto_Sans',sans-serif] text-[17px] leading-6 text-[#8e8e8e] [text-shadow:1px_1px_0_#fff]">CSDN @being_Stella</p>
    </main>
  );
}
